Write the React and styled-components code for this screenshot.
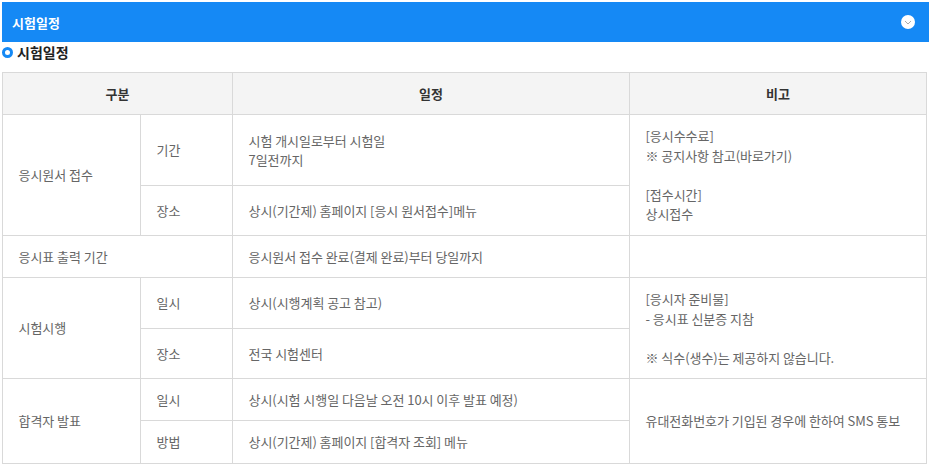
import styled, { createGlobalStyle } from "styled-components";

const GlobalStyle = createGlobalStyle`
  html, body { margin: 0; padding: 0; background: #fff; }
  body { font-family: "Noto Sans CJK KR", "Noto Sans", sans-serif; }
`
const Page = styled.div`
  padding: 2px 0 0 2px;
  width: 929px;
  box-sizing: border-box;
`
const TitleBar = styled.div`
  height: 40px;
  background: #1589f5;
  display: flex;
  align-items: center;
  justify-content: space-between;
  padding: 0 14px 0 10px;
  color: #fff;
  font-size: 13px;
  font-weight: 700;
`
const ToggleIcon = styled.span`
  width: 14px;
  height: 14px;
  border-radius: 50%;
  background: #fff;
  display: flex;
  align-items: center;
  justify-content: center;
`
const Heading = styled.h3`
  margin: 0;
  height: 30px;
  display: flex;
  align-items: flex-start;
  gap: 4px;
  font-size: 14px;
  line-height: 21px;
  font-weight: 700;
  color: #222;
`
const Ring = styled.i`
  width: 11px;
  height: 11px;
  margin-top: 5px;
  box-sizing: border-box;
  border: 3px solid #1589f5;
  border-radius: 50%;
`
const Table = styled.table`
  width: 924px;
  table-layout: fixed;
  border-collapse: collapse;
  font-size: 13px;
  line-height: 19.5px;
  letter-spacing: -0.05px;
  color: #666;
`
const Row = styled.tr`
  height: ${p => p.$h}px;
`
const Head = styled.th`
  border: 1px solid #d9d9d9;
  background: #f4f4f4;
  color: #333;
  font-weight: 700;
  text-align: center;
  padding: 0;
`
const Cell = styled.td`
  border: 1px solid #d9d9d9;
  padding: 0 0 0 15.5px;
  vertical-align: middle;
  font-weight: 400;
`
const Note = styled.p`
  margin: 0 0 ${p => p.$gap || 0}px;
`

const App = () => {
  return (
    <Page>
      <GlobalStyle />
      <TitleBar>
        시험일정
        <ToggleIcon>
          <svg width="8" height="5" viewBox="0 0 8 5">
            <path d="M1 1l3 3 3-3" fill="none" stroke="#aaa" strokeWidth="1" />
          </svg>
        </ToggleIcon>
      </TitleBar>
      <Heading><Ring />시험일정</Heading>
      <Table>
        <colgroup>
          <col style={{ width: 138 }} />
          <col style={{ width: 92 }} />
          <col style={{ width: 397 }} />
          <col style={{ width: 297 }} />
        </colgroup>
        <thead>
          <Row $h={42}>
            <Head colSpan={2}>구분</Head>
            <Head>일정</Head>
            <Head>비고</Head>
          </Row>
        </thead>
        <tbody>
          <Row $h={71}>
            <Cell rowSpan={2}>응시원서 접수</Cell>
            <Cell>기간</Cell>
            <Cell>시험 개시일로부터 시험일<br />7일전까지</Cell>
            <Cell rowSpan={2}>
              <Note>[응시수수료]</Note>
              <Note $gap={19.5}>※ 공지사항 참고(바로가기)</Note>
              <Note>[접수시간]</Note>
              <Note>상시접수</Note>
            </Cell>
          </Row>
          <Row $h={50}>
            <Cell>장소</Cell>
            <Cell>상시(기간제) 홈페이지 [응시 원서접수]메뉴</Cell>
          </Row>
          <Row $h={42}>
            <Cell colSpan={2}>응시표 출력 기간</Cell>
            <Cell>응시원서 접수 완료(결제 완료)부터 당일까지</Cell>
            <Cell />
          </Row>
          <Row $h={51}>
            <Cell rowSpan={2}>시험시행</Cell>
            <Cell>일시</Cell>
            <Cell>상시(시행계획 공고 참고)</Cell>
            <Cell rowSpan={2}>
              <Note>[응시자 준비물]</Note>
              <Note $gap={19.5}>- 응시표 신분증 지참</Note>
              <Note>※ 식수(생수)는 제공하지 않습니다.</Note>
            </Cell>
          </Row>
          <Row $h={50}>
            <Cell>장소</Cell>
            <Cell>전국 시험센터</Cell>
          </Row>
          <Row $h={42}>
            <Cell rowSpan={2}>합격자 발표</Cell>
            <Cell>일시</Cell>
            <Cell>상시(시험 시행일 다음날 오전 10시 이후 발표 예정)</Cell>
            <Cell rowSpan={2}>유대전화번호가 기입된 경우에 한하여 SMS 통보</Cell>
          </Row>
          <Row $h={43}>
            <Cell>방법</Cell>
            <Cell>상시(기간제) 홈페이지 [합격자 조회] 메뉴</Cell>
          </Row>
        </tbody>
      </Table>
    </Page>
  )
}

export default App
